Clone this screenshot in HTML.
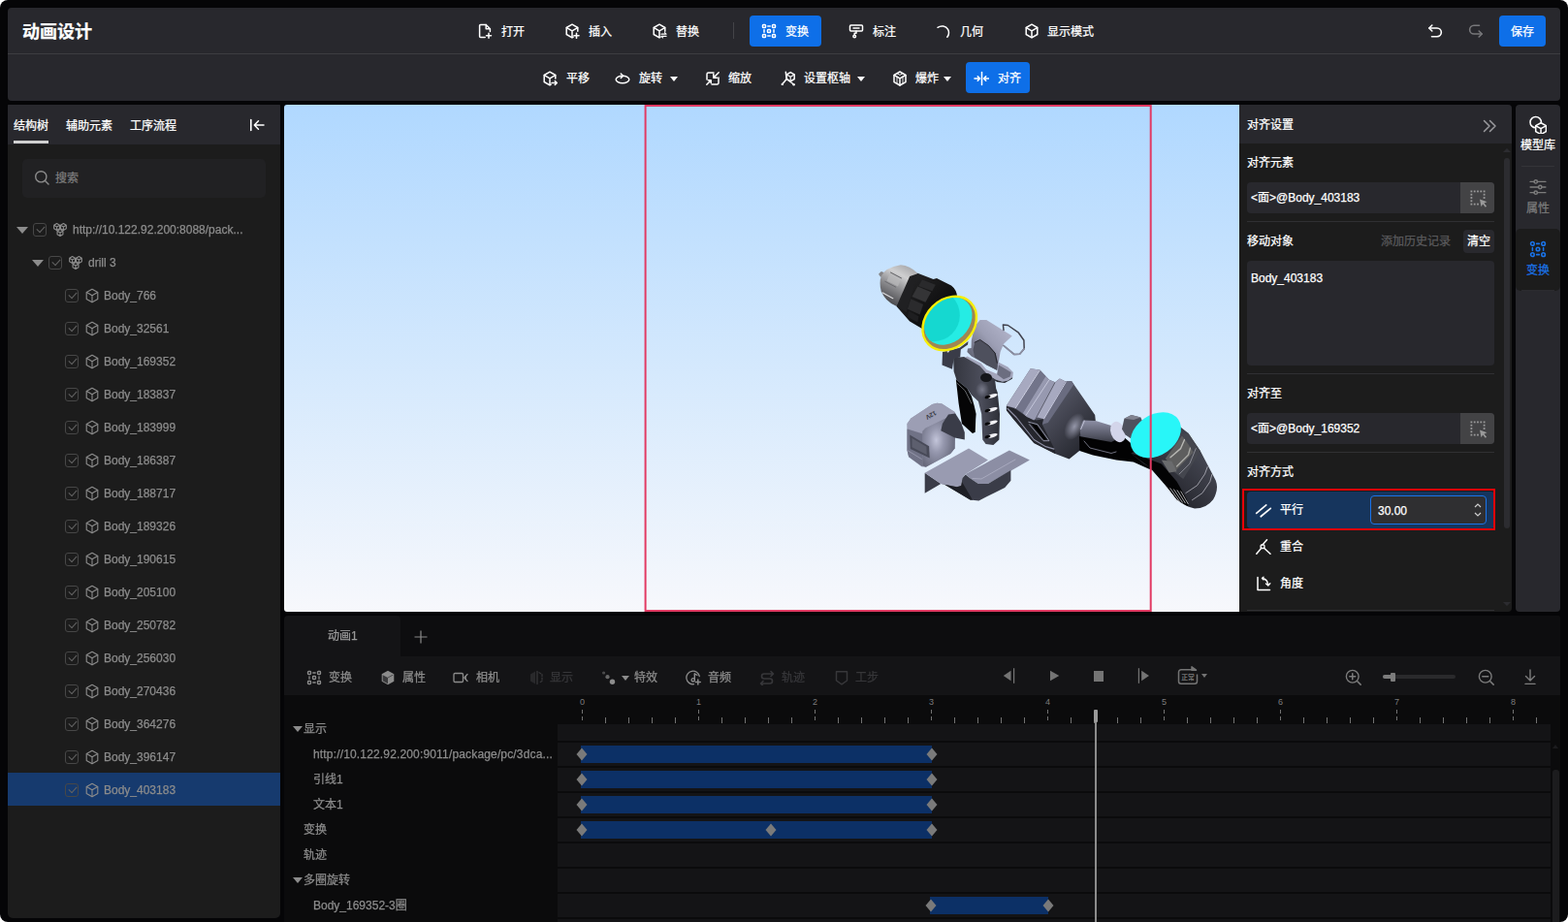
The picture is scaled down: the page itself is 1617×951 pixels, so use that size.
<!DOCTYPE html><html lang="zh-CN"><head><meta charset="utf-8"><title>动画设计</title><style>
html,body{margin:0;padding:0}
html{background:#fff}
body{width:1617px;height:951px;position:relative;overflow:hidden;background:#050507;border-radius:8px;
 font:12px/16px "Liberation Sans","Noto Sans CJK SC",sans-serif;color:#fff;-webkit-text-stroke:.25px currentColor}
*{box-sizing:border-box}
.a{position:absolute}
.ic{display:block;flex:none}
.t{position:absolute;white-space:nowrap;line-height:16px;height:16px}
#top{left:8px;top:8px;width:1601px;height:96px;background:#28282d;border-radius:4px}
#top .hr{left:0;top:47px;width:1601px;height:1px;background:#3d3d41}
.tb{position:absolute;display:flex;align-items:center;height:32px;border-radius:4px;color:#fff}
.tb .ic{margin-right:8px}
.tb.on{background:#0e6fe8}
.caret{width:0;height:0;border-left:4px solid transparent;border-right:4px solid transparent;border-top:5px solid currentColor;margin-left:8px}
#left{left:8px;top:108px;width:281px;height:839px;background:#1c1c1c;border-radius:1px 1px 5px 5px;overflow:hidden}
#left .hd{left:0;top:0;width:281px;height:41px;background:#28282d}
.row{position:absolute;left:0;width:281px;height:34px;color:#8c8c8c}
.row .t{will-change:transform}
.row.sel{background:#163a6e}
.cb{position:absolute;top:10px;width:14px;height:14px;border:1px solid #474747;border-radius:3px}
.cb:after{content:"";position:absolute;left:3px;top:2px;width:7px;height:4px;border-left:1px solid #626262;border-bottom:1px solid #626262;transform:rotate(-47deg)}
.tri{position:absolute;width:0;height:0;border-left:6px solid transparent;border-right:6px solid transparent;border-top:7px solid #8c8c8c}
#view{left:293px;top:108px;width:985px;height:523px;border-radius:3px 0 0 3px;overflow:hidden;
 background:linear-gradient(180deg,#b0d8ff 0%,#d3e8fd 50%,#f7f8fc 100%)}
#right{left:1278px;top:108px;width:281px;height:523px;background:#1c1c1c;border-radius:0 4px 4px 0;overflow:hidden}
#right .hd{left:0;top:0;width:281px;height:40px;background:#28282d}
.inp{position:absolute;left:8px;width:255px;height:32px;background:#28282d;border-radius:4px;overflow:hidden}
.inp .pk{position:absolute;right:0;top:0;width:35px;height:32px;background:#434345;color:#9a9a9a}
.dv{position:absolute;left:8px;width:255px;height:1px;background:#303033}
#side{left:1563px;top:108px;width:46px;height:523px;background:#28282d;border-radius:4px;overflow:hidden}
#tl{left:293px;top:635px;width:1316px;height:316px;background:#0b0b0c;overflow:hidden;border-radius:4px 2px 0 0}
.g{color:#8c8c8c}
#tl .t{will-change:transform}
.d{color:#37373a}
</style></head><body><div id="top" class="a"><div class="t" style="left:15px;top:12px;font-size:18px;font-weight:bold;line-height:26px;height:26px">动画设计</div><div class="a hr"></div><div class="tb" style="left:472px;top:8px;width:74px"><div class="a" style="left:12px;top:8px"><svg class="ic" width="16" height="16" viewBox="0 0 16 16" fill="none" stroke="currentColor" stroke-width="1.5" stroke-linecap="round" stroke-linejoin="round" style=""><path d="M9.2 1.5H3.6a1 1 0 0 0-1 1v11a1 1 0 0 0 1 1h4.6"/><path d="M9.2 1.5l4.2 4.2v2.8"/><path d="M9.2 1.7v4h4"/><path d="M12 10.2v5M9.5 12.7h5"/></svg></div><div class="t" style="left:37px;top:9px">打开</div></div><div class="tb" style="left:562px;top:8px;width:74px"><div class="a" style="left:12px;top:8px"><svg class="ic" width="16" height="16" viewBox="0 0 16 16" fill="none" stroke="currentColor" stroke-width="1.5" stroke-linecap="round" stroke-linejoin="round" style=""><path d="M13.8 8.2V4.5L8 1.2 2.2 4.5v7L8 14.8l1.2-.7"/><path d="M2.4 4.6 8 7.8l5.6-3.2M8 7.8v6.8"/><path d="M12.5 10.3v5M10 12.8h5" stroke-width="1.6"/></svg></div><div class="t" style="left:37px;top:9px">插入</div></div><div class="tb" style="left:652px;top:8px;width:74px"><div class="a" style="left:12px;top:8px"><svg class="ic" width="16" height="16" viewBox="0 0 16 16" fill="none" stroke="currentColor" stroke-width="1.5" stroke-linecap="round" stroke-linejoin="round" style=""><path d="M13.8 8.2V4.5L8 1.2 2.2 4.5v7L8 14.8l1-.6"/><path d="M2.4 4.6 8 7.8l5.6-3.2M8 7.8v6.8"/><path d="M10 11.2h5l-1.5-1.5M15 13.4h-5l1.5 1.5" stroke-width="1.2"/></svg></div><div class="t" style="left:37px;top:9px">替换</div></div><div class="tb on" style="left:765px;top:8px;width:74px"><div class="a" style="left:12px;top:8px"><svg class="ic" width="16" height="16" viewBox="0 0 16 16" fill="none" stroke="currentColor" stroke-width="1.5" stroke-linecap="round" stroke-linejoin="round" style=""><rect x="1.5" y="1.5" width="3" height="3" rx=".8"/><rect x="11.5" y="1.5" width="3" height="3" rx=".8"/><rect x="1.5" y="11.5" width="3" height="3" rx=".8"/><rect x="11.5" y="11.5" width="3" height="3" rx=".8"/><rect x="6.5" y="6.5" width="3" height="3" rx=".8"/><path d="M6.8 3h2.4M6.8 13h2.4M3 6.8v2.4M13 6.8v2.4"/></svg></div><div class="t" style="left:37px;top:9px">变换</div></div><div class="tb" style="left:855px;top:8px;width:74px"><div class="a" style="left:12px;top:8px"><svg class="ic" width="16" height="16" viewBox="0 0 16 16" fill="none" stroke="currentColor" stroke-width="1.5" stroke-linecap="round" stroke-linejoin="round" style=""><rect x="1.5" y="2" width="13" height="6" rx="1"/><path d="M5 5h6"/><path d="M8 8v2.2H6.2v2"/><circle cx="6.2" cy="13.5" r="1.3"/></svg></div><div class="t" style="left:37px;top:9px">标注</div></div><div class="tb" style="left:945px;top:8px;width:74px"><div class="a" style="left:12px;top:8px"><svg class="ic" width="16" height="16" viewBox="0 0 16 16" fill="none" stroke="currentColor" stroke-width="1.5" stroke-linecap="round" stroke-linejoin="round" style=""><path d="M2 4.300c3.500-2.400 8.500-1.600 10.600 2 1.500 2.800 1 5.600-.800 7.900"/></svg></div><div class="t" style="left:37px;top:9px">几何</div></div><div class="tb" style="left:1035px;top:8px;width:98px"><div class="a" style="left:13px;top:8px"><svg class="ic" width="16" height="16" viewBox="0 0 16 16" fill="none" stroke="currentColor" stroke-width="1.5" stroke-linecap="round" stroke-linejoin="round" style=""><path d="M8 1.2 13.8 4.5v7L8 14.8 2.2 11.5v-7z"/><path d="M2.4 4.6 8 7.8l5.6-3.2M8 7.8v6.8"/></svg></div><div class="t" style="left:37px;top:9px">显示模式</div></div><div class="a" style="left:748px;top:15px;width:1px;height:17px;background:#444448"></div><div class="tb" style="left:543px;top:56px;width:66px"><div class="a" style="left:8px;top:9px"><svg class="ic" width="16" height="16" viewBox="0 0 16 16" fill="none" stroke="currentColor" stroke-width="1.5" stroke-linecap="round" stroke-linejoin="round" style=""><path d="M13.8 8V4.500L8 1.200 2.200 4.500v7L8 14.800l1.200-.700"/><path d="M2.400 4.600 8 7.800l5.600-3.200M8 7.800v6.800"/><path d="M10 12.500h5.200M13.300 10.500l2 2-2 2"/></svg></div><div class="t" style="left:33px;top:9px">平移</div></div><div class="tb" style="left:618px;top:56px;width:80px"><div class="a" style="left:8px;top:9px"><svg class="ic" width="16" height="16" viewBox="0 0 16 16" fill="none" stroke="currentColor" stroke-width="1.5" stroke-linecap="round" stroke-linejoin="round" style=""><ellipse cx="8" cy="9" rx="6.800" ry="3.800"/><path d="M6.300 3 8.600 5.200 6.300 7.400" /></svg></div><div class="t" style="left:33px;top:9px">旋转</div><i class="caret a" style="left:65px;top:15px;margin:0"></i></div><div class="tb" style="left:711px;top:56px;width:66px"><div class="a" style="left:8px;top:9px"><svg class="ic" width="16" height="16" viewBox="0 0 16 16" fill="none" stroke="currentColor" stroke-width="1.5" stroke-linecap="round" stroke-linejoin="round" style=""><path d="M9 2H3.500a1.500 1.500 0 0 0-1.500 1.500V9"/><path d="M7 14h5.500a1.500 1.500 0 0 0 1.500-1.500V7"/><path d="M14.200 1.800 8.800 7.200M8.800 3.600v3.600h3.600"/><path d="M1.800 14.200l4.400-4.400M6.200 12.800v-3h-3"/></svg></div><div class="t" style="left:32px;top:9px">缩放</div></div><div class="tb" style="left:789px;top:56px;width:102px"><div class="a" style="left:8px;top:9px"><svg class="ic" width="16" height="16" viewBox="0 0 16 16" fill="none" stroke="currentColor" stroke-width="1.5" stroke-linecap="round" stroke-linejoin="round" style=""><path d="M10.200 1.600 14.200 3.900v4.600l-4 2.300-4-2.300V3.900z"/><path d="M6.400 4 10.200 6.200 14 4M10.200 6.200v4.400" stroke-width="1.100"/><path d="M5.300 1.300 6.200 8.500 1.800 13.800M6.200 8.500l7.300 5.500" stroke-width="1.500"/><circle cx="1.800" cy="13.900" r="1.200" fill="currentColor" stroke="none"/><circle cx="13.600" cy="14.200" r="1.200" fill="currentColor" stroke="none"/></svg></div><div class="t" style="left:32px;top:9px">设置枢轴</div><i class="caret a" style="left:87px;top:15px;margin:0"></i></div><div class="tb" style="left:904px;top:56px;width:76px"><div class="a" style="left:8px;top:9px"><svg class="ic" width="16" height="16" viewBox="0 0 16 16" fill="none" stroke="currentColor" stroke-width="1.5" stroke-linecap="round" stroke-linejoin="round" style=""><path d="M8 1 14 4.400v7.200L8 15 2 11.600V4.400z"/><path d="M2.200 4.500 8 7.800l5.800-3.300M8 7.800V15"/><path d="M5 6.200v7M11 6.200v7M5.200 2.800 8 4.400l2.800-1.600" stroke-width=".9"/></svg></div><div class="t" style="left:32px;top:9px">爆炸</div><i class="caret a" style="left:61px;top:15px;margin:0"></i></div><div class="tb on" style="left:988px;top:56px;width:66px"><div class="a" style="left:8px;top:9px"><svg class="ic" width="16" height="16" viewBox="0 0 16 16" fill="none" stroke="currentColor" stroke-width="1.6" stroke-linecap="round" stroke-linejoin="round" style=""><path d="M8.500 1.500v13" stroke-width="1.500"/><path d="M1 8h5.300M4.300 5.800 6.500 8 4.300 10.200M16 8h-5.300M12.700 5.800 10.500 8l2.200 2.200"/></svg></div><div class="t" style="left:33px;top:9px">对齐</div></div><div class="a" style="left:1464px;top:16px;color:#fff"><svg class="ic" width="16" height="16" viewBox="0 0 16 16" fill="none" stroke="currentColor" stroke-width="1.6" stroke-linecap="round" stroke-linejoin="round" style=""><path d="M4.800 2 1.800 5l3 3"/><path d="M2 5h8a4.300 4.300 0 0 1 0 8.700H4.500"/></svg></div><div class="a" style="left:1506px;top:16px;color:#77777a"><svg class="ic" width="16" height="16" viewBox="0 0 16 16" fill="none" stroke="currentColor" stroke-width="1.6" stroke-linecap="round" stroke-linejoin="round" style=""><g transform="rotate(180 8 8)"><path d="M4.800 2 1.800 5l3 3"/><path d="M2 5h8a4.300 4.300 0 0 1 0 8.700H4.500"/></g></svg></div><div class="tb on" style="left:1538px;top:8px;width:48px"><div class="t" style="left:12px;top:9px">保存</div></div></div><div id="left" class="a"><div class="a hd"></div><div class="t" style="left:6px;top:14px">结构树</div><div class="t" style="left:60px;top:14px">辅助元素</div><div class="t" style="left:126px;top:14px">工序流程</div><div class="a" style="left:6px;top:37px;width:36px;height:3px;background:#d0d0d0"></div><div class="a" style="left:249px;top:13px;color:#fff"><svg class="ic" width="16" height="16" viewBox="0 0 16 16" fill="none" stroke="currentColor" stroke-width="1.3" stroke-linecap="round" stroke-linejoin="round" style=""><path d="M1.800 2.500v11" stroke-width="1.600"/><path d="M15 8H5.500M9.500 3.800 5.300 8l4.200 4.200" stroke-width="1.500"/></svg></div><div class="a" style="left:15px;top:56px;width:251px;height:40px;background:#212123;border-radius:5px"></div><div class="a" style="left:27px;top:67px;color:#8c8c8c"><svg class="ic" width="16" height="16" viewBox="0 0 16 16" fill="none" stroke="currentColor" stroke-width="1.4" stroke-linecap="round" stroke-linejoin="round" style=""><circle cx="7.300" cy="7.300" r="5.600"/><path d="M11.500 11.500l3.500 3.500"/></svg></div><div class="t" style="left:49px;top:68px;color:#7c7c7c">搜索</div><div class="row" style="top:112px"><i class="tri" style="left:9px;top:14px"></i><i class="cb" style="left:26px"></i><div class="a" style="left:46px;top:9px"><svg class="ic" width="16" height="16" viewBox="0 0 16 16" fill="none" stroke="currentColor" stroke-width="1.1" stroke-linecap="round" stroke-linejoin="round" style=""><path d="M4.60 1.60 7.54 3.30 7.54 6.70 4.60 8.40 1.66 6.70 1.66 3.30zM1.66 3.30 L4.60 5.00 L7.54 3.30 M4.60 5.00 V8.40"/><path d="M11.40 1.60 14.34 3.30 14.34 6.70 11.40 8.40 8.46 6.70 8.46 3.30zM8.46 3.30 L11.40 5.00 L14.34 3.30 M11.40 5.00 V8.40"/><path d="M8.00 7.60 10.94 9.30 10.94 12.70 8.00 14.40 5.06 12.70 5.06 9.30zM5.06 9.30 L8.00 11.00 L10.94 9.30 M8.00 11.00 V14.40"/></svg></div><div class="t" style="left:67px;top:9px">http://10.122.92.200:8088/pack...</div></div><div class="row" style="top:146px"><i class="tri" style="left:25px;top:14px"></i><i class="cb" style="left:42px"></i><div class="a" style="left:62px;top:9px"><svg class="ic" width="16" height="16" viewBox="0 0 16 16" fill="none" stroke="currentColor" stroke-width="1.1" stroke-linecap="round" stroke-linejoin="round" style=""><path d="M4.60 1.60 7.54 3.30 7.54 6.70 4.60 8.40 1.66 6.70 1.66 3.30zM1.66 3.30 L4.60 5.00 L7.54 3.30 M4.60 5.00 V8.40"/><path d="M11.40 1.60 14.34 3.30 14.34 6.70 11.40 8.40 8.46 6.70 8.46 3.30zM8.46 3.30 L11.40 5.00 L14.34 3.30 M11.40 5.00 V8.40"/><path d="M8.00 7.60 10.94 9.30 10.94 12.70 8.00 14.40 5.06 12.70 5.06 9.30zM5.06 9.30 L8.00 11.00 L10.94 9.30 M8.00 11.00 V14.40"/></svg></div><div class="t" style="left:83px;top:9px">drill 3</div></div><div class="row" style="top:180px"><i class="cb" style="left:59px"></i><div class="a" style="left:79px;top:9px"><svg class="ic" width="16" height="16" viewBox="0 0 16 16" fill="none" stroke="currentColor" stroke-width="1.1" stroke-linecap="round" stroke-linejoin="round" style=""><path d="M8 1.2 13.8 4.5v7L8 14.8 2.2 11.5v-7z"/><path d="M2.4 4.6 8 7.8l5.6-3.2M8 7.8v6.8"/></svg></div><div class="t" style="left:99px;top:9px">Body_766</div></div><div class="row" style="top:214px"><i class="cb" style="left:59px"></i><div class="a" style="left:79px;top:9px"><svg class="ic" width="16" height="16" viewBox="0 0 16 16" fill="none" stroke="currentColor" stroke-width="1.1" stroke-linecap="round" stroke-linejoin="round" style=""><path d="M8 1.2 13.8 4.5v7L8 14.8 2.2 11.5v-7z"/><path d="M2.4 4.6 8 7.8l5.6-3.2M8 7.8v6.8"/></svg></div><div class="t" style="left:99px;top:9px">Body_32561</div></div><div class="row" style="top:248px"><i class="cb" style="left:59px"></i><div class="a" style="left:79px;top:9px"><svg class="ic" width="16" height="16" viewBox="0 0 16 16" fill="none" stroke="currentColor" stroke-width="1.1" stroke-linecap="round" stroke-linejoin="round" style=""><path d="M8 1.2 13.8 4.5v7L8 14.8 2.2 11.5v-7z"/><path d="M2.4 4.6 8 7.8l5.6-3.2M8 7.8v6.8"/></svg></div><div class="t" style="left:99px;top:9px">Body_169352</div></div><div class="row" style="top:282px"><i class="cb" style="left:59px"></i><div class="a" style="left:79px;top:9px"><svg class="ic" width="16" height="16" viewBox="0 0 16 16" fill="none" stroke="currentColor" stroke-width="1.1" stroke-linecap="round" stroke-linejoin="round" style=""><path d="M8 1.2 13.8 4.5v7L8 14.8 2.2 11.5v-7z"/><path d="M2.4 4.6 8 7.8l5.6-3.2M8 7.8v6.8"/></svg></div><div class="t" style="left:99px;top:9px">Body_183837</div></div><div class="row" style="top:316px"><i class="cb" style="left:59px"></i><div class="a" style="left:79px;top:9px"><svg class="ic" width="16" height="16" viewBox="0 0 16 16" fill="none" stroke="currentColor" stroke-width="1.1" stroke-linecap="round" stroke-linejoin="round" style=""><path d="M8 1.2 13.8 4.5v7L8 14.8 2.2 11.5v-7z"/><path d="M2.4 4.6 8 7.8l5.6-3.2M8 7.8v6.8"/></svg></div><div class="t" style="left:99px;top:9px">Body_183999</div></div><div class="row" style="top:350px"><i class="cb" style="left:59px"></i><div class="a" style="left:79px;top:9px"><svg class="ic" width="16" height="16" viewBox="0 0 16 16" fill="none" stroke="currentColor" stroke-width="1.1" stroke-linecap="round" stroke-linejoin="round" style=""><path d="M8 1.2 13.8 4.5v7L8 14.8 2.2 11.5v-7z"/><path d="M2.4 4.6 8 7.8l5.6-3.2M8 7.8v6.8"/></svg></div><div class="t" style="left:99px;top:9px">Body_186387</div></div><div class="row" style="top:384px"><i class="cb" style="left:59px"></i><div class="a" style="left:79px;top:9px"><svg class="ic" width="16" height="16" viewBox="0 0 16 16" fill="none" stroke="currentColor" stroke-width="1.1" stroke-linecap="round" stroke-linejoin="round" style=""><path d="M8 1.2 13.8 4.5v7L8 14.8 2.2 11.5v-7z"/><path d="M2.4 4.6 8 7.8l5.6-3.2M8 7.8v6.8"/></svg></div><div class="t" style="left:99px;top:9px">Body_188717</div></div><div class="row" style="top:418px"><i class="cb" style="left:59px"></i><div class="a" style="left:79px;top:9px"><svg class="ic" width="16" height="16" viewBox="0 0 16 16" fill="none" stroke="currentColor" stroke-width="1.1" stroke-linecap="round" stroke-linejoin="round" style=""><path d="M8 1.2 13.8 4.5v7L8 14.8 2.2 11.5v-7z"/><path d="M2.4 4.6 8 7.8l5.6-3.2M8 7.8v6.8"/></svg></div><div class="t" style="left:99px;top:9px">Body_189326</div></div><div class="row" style="top:452px"><i class="cb" style="left:59px"></i><div class="a" style="left:79px;top:9px"><svg class="ic" width="16" height="16" viewBox="0 0 16 16" fill="none" stroke="currentColor" stroke-width="1.1" stroke-linecap="round" stroke-linejoin="round" style=""><path d="M8 1.2 13.8 4.5v7L8 14.8 2.2 11.5v-7z"/><path d="M2.4 4.6 8 7.8l5.6-3.2M8 7.8v6.8"/></svg></div><div class="t" style="left:99px;top:9px">Body_190615</div></div><div class="row" style="top:486px"><i class="cb" style="left:59px"></i><div class="a" style="left:79px;top:9px"><svg class="ic" width="16" height="16" viewBox="0 0 16 16" fill="none" stroke="currentColor" stroke-width="1.1" stroke-linecap="round" stroke-linejoin="round" style=""><path d="M8 1.2 13.8 4.5v7L8 14.8 2.2 11.5v-7z"/><path d="M2.4 4.6 8 7.8l5.6-3.2M8 7.8v6.8"/></svg></div><div class="t" style="left:99px;top:9px">Body_205100</div></div><div class="row" style="top:520px"><i class="cb" style="left:59px"></i><div class="a" style="left:79px;top:9px"><svg class="ic" width="16" height="16" viewBox="0 0 16 16" fill="none" stroke="currentColor" stroke-width="1.1" stroke-linecap="round" stroke-linejoin="round" style=""><path d="M8 1.2 13.8 4.5v7L8 14.8 2.2 11.5v-7z"/><path d="M2.4 4.6 8 7.8l5.6-3.2M8 7.8v6.8"/></svg></div><div class="t" style="left:99px;top:9px">Body_250782</div></div><div class="row" style="top:554px"><i class="cb" style="left:59px"></i><div class="a" style="left:79px;top:9px"><svg class="ic" width="16" height="16" viewBox="0 0 16 16" fill="none" stroke="currentColor" stroke-width="1.1" stroke-linecap="round" stroke-linejoin="round" style=""><path d="M8 1.2 13.8 4.5v7L8 14.8 2.2 11.5v-7z"/><path d="M2.4 4.6 8 7.8l5.6-3.2M8 7.8v6.8"/></svg></div><div class="t" style="left:99px;top:9px">Body_256030</div></div><div class="row" style="top:588px"><i class="cb" style="left:59px"></i><div class="a" style="left:79px;top:9px"><svg class="ic" width="16" height="16" viewBox="0 0 16 16" fill="none" stroke="currentColor" stroke-width="1.1" stroke-linecap="round" stroke-linejoin="round" style=""><path d="M8 1.2 13.8 4.5v7L8 14.8 2.2 11.5v-7z"/><path d="M2.4 4.6 8 7.8l5.6-3.2M8 7.8v6.8"/></svg></div><div class="t" style="left:99px;top:9px">Body_270436</div></div><div class="row" style="top:622px"><i class="cb" style="left:59px"></i><div class="a" style="left:79px;top:9px"><svg class="ic" width="16" height="16" viewBox="0 0 16 16" fill="none" stroke="currentColor" stroke-width="1.1" stroke-linecap="round" stroke-linejoin="round" style=""><path d="M8 1.2 13.8 4.5v7L8 14.8 2.2 11.5v-7z"/><path d="M2.4 4.6 8 7.8l5.6-3.2M8 7.8v6.8"/></svg></div><div class="t" style="left:99px;top:9px">Body_364276</div></div><div class="row" style="top:656px"><i class="cb" style="left:59px"></i><div class="a" style="left:79px;top:9px"><svg class="ic" width="16" height="16" viewBox="0 0 16 16" fill="none" stroke="currentColor" stroke-width="1.1" stroke-linecap="round" stroke-linejoin="round" style=""><path d="M8 1.2 13.8 4.5v7L8 14.8 2.2 11.5v-7z"/><path d="M2.4 4.6 8 7.8l5.6-3.2M8 7.8v6.8"/></svg></div><div class="t" style="left:99px;top:9px">Body_396147</div></div><div class="row" style="top:690px"><div class="a" style="left:0;top:-1px;width:281px;height:34px;background:#163a6e"></div><i class="cb" style="left:59px"></i><div class="a" style="left:79px;top:9px"><svg class="ic" width="16" height="16" viewBox="0 0 16 16" fill="none" stroke="currentColor" stroke-width="1.1" stroke-linecap="round" stroke-linejoin="round" style=""><path d="M8 1.2 13.8 4.5v7L8 14.8 2.2 11.5v-7z"/><path d="M2.4 4.6 8 7.8l5.6-3.2M8 7.8v6.8"/></svg></div><div class="t" style="left:99px;top:9px">Body_403183</div></div></div><div id="view" class="a"><svg class="a" style="left:0;top:0" width="985" height="523" viewBox="293 108 985 523"><defs>
<linearGradient id="gMetal" x1=".7" y1="0" x2=".2" y2="1"><stop offset="0" stop-color="#a9a9ab"/><stop offset=".25" stop-color="#cfcfd0"/><stop offset=".55" stop-color="#8d8d90"/><stop offset=".8" stop-color="#5e5e62"/><stop offset="1" stop-color="#3c3c40"/></linearGradient>
<linearGradient id="gBlk" x1="0" y1="0" x2="1" y2="1"><stop offset="0" stop-color="#2a2a2c"/><stop offset=".5" stop-color="#151516"/><stop offset="1" stop-color="#020202"/></linearGradient>
<linearGradient id="gClip" x1="1" y1="0" x2="0" y2="1"><stop offset="0" stop-color="#b9bbd1"/><stop offset=".45" stop-color="#9c9eb4"/><stop offset="1" stop-color="#4a4c59"/></linearGradient>
<linearGradient id="gBody" x1="0" y1="0" x2="1" y2="0"><stop offset="0" stop-color="#34363f"/><stop offset=".6" stop-color="#4b4d5a"/><stop offset="1" stop-color="#2e3038"/></linearGradient>
<linearGradient id="gPackR" x1="0" y1="0" x2="1" y2="1"><stop offset="0" stop-color="#5f6175"/><stop offset=".45" stop-color="#505260"/><stop offset="1" stop-color="#1c1d23"/></linearGradient>
<linearGradient id="gNeck" x1="0" y1="0" x2="0" y2="1"><stop offset="0" stop-color="#8e90a6"/><stop offset=".4" stop-color="#4a4c59"/><stop offset=".7" stop-color="#0a0a0c"/><stop offset="1" stop-color="#000"/></linearGradient>
<linearGradient id="gMotor" x1="0" y1="1" x2="1" y2="0"><stop offset="0" stop-color="#050506"/><stop offset=".4" stop-color="#2c2d35"/><stop offset=".7" stop-color="#42444f"/><stop offset="1" stop-color="#33353e"/></linearGradient>
<radialGradient id="gBox" cx=".42" cy=".5" r=".65"><stop offset="0" stop-color="#c3c5da"/><stop offset=".35" stop-color="#9698ae"/><stop offset="1" stop-color="#5e6072"/></radialGradient>
<radialGradient id="gHi" cx=".5" cy=".5" r=".5"><stop offset="0" stop-color="#b9bbd0" stop-opacity=".9"/><stop offset="1" stop-color="#b9bbd0" stop-opacity="0"/></radialGradient>
</defs><polygon points="906.0,282.8 908.7,279.9 911.6,281.1 912.1,285.1 908.1,285.7" fill="#858588" /><path d="M908.7 285.1Q912.7 275.9 928.9 273.3Q938.2 274.1 946.3 281.7L924.3 315.8Q912.7 310.6 908.7 300.2Q906.4 292.1 908.7 285.1Z" fill="url(#gMetal)"/><polyline points="918.5,281.1 929.5,286.9" fill="none" stroke="#5d5d61" stroke-width="1" stroke-linejoin="round" stroke-linecap="round" /><polyline points="912.7,290.3 923.7,296.1" fill="none" stroke="#6a6a6e" stroke-width="1" stroke-linejoin="round" stroke-linecap="round" /><polyline points="910.4,301.9 920.8,307.7" fill="none" stroke="#dcdcde" stroke-width="1.2" stroke-linejoin="round" stroke-linecap="round" /><polygon points="917.4,282.8 928.9,288.0 926.0,295.6 914.5,289.8" fill="#b9b9bb" opacity=".7"/><path d="M946.3 281.7L962.5 288.0L966.0 286.9L981.0 294.4Q986.8 299.0 987.0 306.0L950.9 338.9L938.2 331.4L924.3 315.8Z" fill="url(#gBlk)"/><polygon points="938.2,285.1 946.3,282.2 934.7,322.2 924.9,315.2" fill="#202022" /><polygon points="946.3,295.6 960.2,301.3 954.4,311.8 940.5,306.0" fill="#343436" /><polygon points="950.9,288.6 964.8,293.8 961.3,300.2 947.4,295.0" fill="#2a2a2c" /><polygon points="939.3,308.3 952.1,314.1 948.6,324.5 935.9,318.7" fill="#2b2b2d" /><polygon points="937.0,320.4 947.4,326.2 946.3,332.6 935.9,326.8" fill="#1e1e20" /><polygon points="972.0,363.1 989.7,358.7 998.5,352.1 998.0,355.6 990.8,360.4 990.2,368.6 983.6,369.7 982.0,380.8 971.5,376.4" fill="#3a3c48" /><polygon points="976.4,361.5 978.6,360.9 978.9,363.1 977.0,363.7" fill="#d8d8dc" /><polygon points="1001.8,351.0 1005.1,336.6 1010.7,330.0 1017.3,330.0 1043.8,346.6 1035.0,354.8 1031.6,363.1 1029.7,374.2 1028.3,381.9 1001.8,367.5 997.4,363.1 998.0,359.6 1001.6,358.9" fill="url(#gClip)" /><polygon points="1005.1,353.2 1010.7,350.4 1019.5,356.5 1026.7,364.2 1028.9,374.2 1028.3,381.9 1017.3,376.4 1005.1,368.6 1003.5,360.9" fill="#4e505d" /><polyline points="1005.1,353.2 1010.7,350.4 1019.5,356.5 1026.1,364.2 1028.3,374.2" fill="none" stroke="#16171b" stroke-width="0.8" stroke-linejoin="round" stroke-linecap="round" /><polyline points="1035.0,340.5 1034.4,335.0 1039.4,335.5 1050.4,343.2 1055.9,351.0 1056.2,359.8 1051.5,365.3 1046.0,365.6 1035.0,356.5" fill="none" stroke="#41424d" stroke-width="1.5" stroke-linejoin="round" stroke-linecap="round" /><polyline points="1056.2,359.8 1051.5,365.3 1046.0,365.6 1035.0,356.5" fill="none" stroke="#9092a6" stroke-width="1.4" stroke-linejoin="round" stroke-linecap="round" /><polygon points="1029.4,373.6 1039.4,378.6 1044.9,384.1 1044.3,389.1 1039.4,392.4 1033.9,393.8 1027.2,391.8 1016.2,385.2 1010.7,377.5 994.7,368.9 997.4,367.5 1011.8,374.7 1017.3,381.3 1028.3,385.8" fill="#a3a5bb" /><polygon points="1030.0,376.4 1042.7,384.1 1041.6,388.5 1035.0,391.3 1028.3,386.3" fill="#6c6e80" /><polygon points="1016.2,385.2 1027.2,391.8 1033.9,393.8 1039.4,392.4 1044.3,389.1 1043.8,390.7 1036.1,395.1 1028.3,394.0 1017.3,387.4" fill="#2c2d35" /><polygon points="983.1,369.2 994.1,368.1 1010.7,377.5 1017.3,385.2 1026.1,391.8 1027.2,400.7 1028.8,405.0 1031.0,427.1 1030.4,453.6 1024.4,459.1 1016.6,458.0 1013.3,453.6 1012.2,427.1 1008.9,413.9 1001.8,407.3 997.4,400.7 986.4,391.8 983.6,383.0" fill="url(#gBody)" /><ellipse cx="1017" cy="389.500" rx="6" ry="4.500" fill="#15161a"/><ellipse cx="1013" cy="402" rx="7" ry="8" fill="url(#gHi)" opacity=".45"/><polygon points="985.8,391.3 997.4,400.7 1001.8,408.4 1004.6,418.3 1006.6,427.1 1006.2,432.6 1005.7,445.8 1002.9,446.9 991.9,437.0 988.6,416.0 986.9,400.7" fill="#050506" /><polyline points="986.9,395.1 995.2,402.9 1001.8,416.1" fill="none" stroke="#8a8c90" stroke-width="0.7" stroke-linejoin="round" stroke-linecap="round" /><ellipse cx="1023" cy="408.5" rx="6" ry="1.9" fill="#f2f2f6" transform="rotate(-17 1023 408.5)"/><ellipse cx="1018.500" cy="409.5" rx="3" ry="1.6" fill="#08080a" transform="rotate(-17 1018.500 409.5)"/><ellipse cx="1023" cy="422.5" rx="6" ry="1.9" fill="#f2f2f6" transform="rotate(-17 1023 422.5)"/><ellipse cx="1018.500" cy="423.5" rx="3" ry="1.6" fill="#08080a" transform="rotate(-17 1018.500 423.5)"/><ellipse cx="1023" cy="436.0" rx="6" ry="1.9" fill="#f2f2f6" transform="rotate(-17 1023 436.0)"/><ellipse cx="1018.500" cy="437.0" rx="3" ry="1.6" fill="#08080a" transform="rotate(-17 1018.500 437.0)"/><ellipse cx="1023" cy="449.5" rx="6" ry="1.9" fill="#f2f2f6" transform="rotate(-17 1023 449.5)"/><ellipse cx="1018.500" cy="450.5" rx="3" ry="1.6" fill="#08080a" transform="rotate(-17 1018.500 450.5)"/><polygon points="935.5,437.0 939.4,431.5 961.4,417.1 966.4,415.8 971.4,416.4 984.6,424.9 985.7,429.3 984.6,462.4 980.2,467.9 954.8,481.7 950.4,481.2 937.1,471.2 935.5,464.6" fill="#8e90a6" /><polygon points="935.5,437.0 939.4,431.5 961.4,417.1 966.4,415.8 971.4,416.4 984.6,424.9 985.2,427.1 953.7,442.0 950.9,447.0 936.0,442.5" fill="#9c9eb4" /><polygon points="951.3,444.7 954.3,441.7 985.2,426.5 984.6,462.4 980.2,467.9 954.8,481.7 951.3,480.3" fill="url(#gBox)" /><polygon points="935.5,442.5 951.3,447.5 951.3,481.2 937.1,471.2 935.5,464.6" fill="#707286" /><polygon points="938.2,448.6 958.1,460.2 958.7,472.6 938.8,463.0" fill="#484a58" /><polygon points="940.5,451.9 955.4,460.8 955.7,469.0 940.5,461.3" fill="#5d5f6e" /><polyline points="936.0,464.6 950.4,473.5" fill="none" stroke="#9a9cb0" stroke-width="0.8" stroke-linejoin="round" stroke-linecap="round" /><polygon points="978.0,427.6 985.2,426.5 991.2,435.9 994.8,445.9 994.8,453.6 984.6,451.4 970.3,444.2 971.9,437.0" fill="#3a3c48" /><text x="0" y="0" font-size="6.500" font-weight="bold" fill="#34363f" font-family="Liberation Sans,sans-serif" transform="translate(964 423.500) rotate(150)">12V</text><polygon points="953.7,487.8 970.3,498.9 953.7,508.8" fill="#3a3c48" /><polygon points="953.7,487.8 999.0,462.4 1018.9,474.6 995.7,488.9 992.4,493.3 991.2,501.1 986.8,502.2 970.3,498.9" fill="#999bb1" /><polygon points="995.7,488.9 1040.9,464.6 1061.9,474.6 1018.9,498.9 1008.9,498.9 1000.0,493.0" fill="#8c8ea4" /><polyline points="1003.0,493.5 1012.0,494.0 1047.0,474.0" fill="none" stroke="#aeb0c4" stroke-width="0.8" stroke-linejoin="round" stroke-linecap="round" /><polygon points="970.3,498.9 986.8,502.2 991.2,501.1 992.4,493.3 995.7,489.5 1000.0,493.0 1008.9,498.9 1018.9,498.9 1042.4,485.1 1042.4,495.8 1036.2,503.0 1009.4,516.4 1000.4,515.5 973.6,499.4" fill="#3a3c48" /><polygon points="970.3,498.9 986.8,502.2 991.2,501.1 992.0,497.0 1003.0,515.7 1000.4,515.5 973.6,499.4" fill="#1e1f25" /><polygon points="1037.9,418.4 1062.7,380.3 1072.3,381.5 1082.0,391.8 1088.1,394.2 1092.9,390.6 1098.9,393.6 1105.0,393.0 1129.2,428.1 1129.8,434.1 1117.1,437.7 1114.7,463.7 1102.6,473.4 1088.1,468.0 1066.3,457.1 1045.7,432.9 1037.9,423.2" fill="url(#gPackR)" /><ellipse cx="1108" cy="440" rx="9" ry="15" fill="url(#gHi)" opacity=".8" transform="rotate(28 1108 440)"/><polygon points="1037.9,419.0 1046.9,421.4 1059.0,429.9 1068.7,433.5 1076.0,432.3 1074.8,437.7 1088.1,464.4 1088.1,468.0 1066.3,457.1 1045.7,432.9 1037.9,423.2" fill="#25262d" /><polyline points="1039.1,421.4 1048.1,430.5 1066.3,453.5 1078.4,460.7 1086.9,463.1" fill="none" stroke="#8d8fa4" stroke-width="1.2" stroke-linejoin="round" stroke-linecap="round" /><polyline points="1060.8,435.3 1069.9,437.7 1082.0,454.7 1076.0,454.7 1061.5,437.7" fill="none" stroke="#9a9cb0" stroke-width="0.9" stroke-linejoin="round" stroke-linecap="round" /><polygon points="1062.7,436.5 1069.3,438.9 1079.6,453.5 1076.6,453.5" fill="#000" /><polygon points="1037.9,418.4 1062.7,380.3 1072.3,381.5 1047.2,421.0" fill="#a7a9c0" /><polygon points="1047.2,421.0 1072.3,381.5 1078.4,388.1 1054.8,426.2" fill="#72748a" /><polygon points="1054.8,426.2 1078.4,388.1 1082.0,391.8 1088.1,394.2 1068.5,431.1 1066.3,433.5 1059.0,429.9" fill="#9799b0" /><polygon points="1068.5,431.1 1088.1,394.2 1092.9,390.6 1098.9,393.6 1076.6,432.3 1069.9,430.5" fill="#a7a9c0" /><polygon points="1076.6,432.3 1098.9,393.6 1105.0,393.0 1107.4,396.6 1080.8,435.9 1074.8,437.7" fill="#6a6c80" /><polyline points="1047.2,421.0 1072.3,381.9" fill="none" stroke="#d0d2e4" stroke-width="1" stroke-linejoin="round" stroke-linecap="round" /><polyline points="1058.1,428.3 1081.8,392.0" fill="none" stroke="#c4c6da" stroke-width="1" stroke-linejoin="round" stroke-linecap="round" /><polyline points="1076.6,431.9 1099.2,394.0" fill="none" stroke="#c9cbe0" stroke-width="1" stroke-linejoin="round" stroke-linecap="round" /><polyline points="1068.5,431.1 1087.8,394.8" fill="none" stroke="#50525f" stroke-width="0.8" stroke-linejoin="round" stroke-linecap="round" /><polygon points="1113.5,441.4 1117.1,433.5 1129.8,434.1 1146.1,438.9 1149.1,443.8 1152.2,458.3 1163.1,469.2 1180.0,475.2 1180.0,480.1 1151.0,467.4 1146.1,468.0 1124.4,461.9 1114.7,463.7 1114.7,453.5" fill="url(#gNeck)" /><polyline points="1114.7,442.6 1118.3,434.1" fill="none" stroke="#c0c2d6" stroke-width="1" stroke-linejoin="round" stroke-linecap="round" /><polygon points="1113.0,450.0 1146.0,456.0 1158.0,450.0 1172.0,462.0 1180.0,474.0 1192.0,486.0 1184.4,483.5 1168.8,476.5 1151.4,474.6 1127.2,469.4 1113.3,465.0" fill="#020203" /><polyline points="1118.0,455.0 1124.0,462.0 1146.0,467.5 1151.0,466.0" fill="none" stroke="#8a8c9e" stroke-width="0.8" stroke-linejoin="round" stroke-linecap="round" /><ellipse cx="1153" cy="445.500" rx="7.500" ry="11" fill="#d3d5ea" transform="rotate(-20 1153 445.500)"/><polygon points="1157.0,442.6 1159.4,431.7 1166.7,428.1 1176.4,430.5 1177.6,433.5 1167.9,453.5 1160.6,448.6" fill="#4e505c" /><polygon points="1159.4,431.7 1166.7,428.1 1176.4,430.5 1169.1,432.9" fill="#80828f" /><path d="M1213.6 437.6L1225.4 446.8L1237.9 465.2L1253.7 495.4Q1257.3 504.6 1251.1 515.2Q1243.9 524.6 1232.0 524.6Q1221.5 522.0 1213.6 515.2L1203.1 502.0L1190.0 483.6L1179.4 478.4L1166.3 467.8Z" fill="url(#gMotor)"/><polygon points="1166.3,467.8 1184.7,481.0 1203.1,502.0 1213.6,515.2 1225.4,522.4 1224.1,515.2 1213.6,496.8 1197.8,478.4 1179.4,471.8" fill="#030304" /><polygon points="1201.8,473.1 1218.9,449.4 1232.0,465.2 1216.2,488.9" fill="#5e5e5e" /><polyline points="1207.0,471.8 1217.6,462.6 1221.5,453.4" fill="none" stroke="#b8b8b4" stroke-width="1.4" stroke-linejoin="round" stroke-linecap="round" /><polyline points="1213.6,481.0 1225.4,469.2 1228.1,460.0" fill="none" stroke="#a9a9a5" stroke-width="1.4" stroke-linejoin="round" stroke-linecap="round" /><polygon points="1218.9,448.1 1225.4,446.8 1237.9,465.2 1234.6,471.1 1220.2,494.1 1211.0,486.9 1230.7,466.5" fill="#44464e" /><polygon points="1197.8,474.4 1208.4,475.7 1213.6,486.2 1205.7,487.6" fill="#6a6b6d" /><polyline points="1222.8,508.6 1234.6,500.7 1242.5,488.9 1245.2,481.6" fill="none" stroke="#c5c5d0" stroke-width="0.7" stroke-linejoin="round" stroke-linecap="round" /><polyline points="1229.4,515.8 1239.9,508.6 1247.8,496.8 1249.8,489.5" fill="none" stroke="#c5c5d0" stroke-width="0.7" stroke-linejoin="round" stroke-linecap="round" /><polyline points="1216.2,488.9 1226.8,478.4 1233.3,462.6" fill="none" stroke="#b5b5c0" stroke-width="0.6" stroke-linejoin="round" stroke-linecap="round" /><polyline points="1203.1,502.7 1213.6,516.5" fill="none" stroke="#d0d0d4" stroke-width="0.8" stroke-linejoin="round" stroke-linecap="round" /><polyline points="1206.8,503.7 1216.5,517.3" fill="none" stroke="#d0d0d4" stroke-width="0.8" stroke-linejoin="round" stroke-linecap="round" /><polyline points="1210.5,504.8 1219.4,518.1" fill="none" stroke="#d0d0d4" stroke-width="0.8" stroke-linejoin="round" stroke-linecap="round" /><polyline points="1214.1,505.8 1222.3,518.8" fill="none" stroke="#d0d0d4" stroke-width="0.8" stroke-linejoin="round" stroke-linecap="round" /><polyline points="1217.8,506.9 1225.2,519.6" fill="none" stroke="#d0d0d4" stroke-width="0.8" stroke-linejoin="round" stroke-linecap="round" /><g transform="rotate(-45 979.2 333.5)"><ellipse cx="979.2" cy="333.5" rx="30.500" ry="24.500" fill="#9f8654"/><ellipse cx="980" cy="330.900" rx="27.500" ry="21.400" fill="#25ece4"/><clipPath id="cD"><ellipse cx="980" cy="330.900" rx="27.500" ry="21.400"/></clipPath><circle cx="973.500" cy="316" r="27" fill="#12d3cb" opacity=".8" clip-path="url(#cD)"/><ellipse cx="979.2" cy="333.5" rx="30.600" ry="24.600" fill="none" stroke="#f6ee05" stroke-width="2.400"/></g><ellipse cx="1191.800" cy="448.700" rx="28.400" ry="20.800" fill="#28f6f8" transform="rotate(-35 1191.800 448.700)"/></svg><svg class="a" style="left:0;top:0" width="985" height="523" viewBox="293 108 985 523"><rect x="665.6" y="109" width="521.1" height="521" fill="none" stroke="#e23a63" stroke-width="2"/></svg></div><div id="right" class="a"><div class="a hd"></div><div class="t" style="left:8px;top:13px">对齐设置</div><div class="a" style="left:250px;top:14px;color:#9a9a9e"><svg class="ic" width="16" height="16" viewBox="0 0 16 16" fill="none" stroke="currentColor" stroke-width="1.5" stroke-linecap="round" stroke-linejoin="round" style=""><path d="M2.500 2.500 8 8l-5.500 5.500M8.500 2.500 14 8l-5.500 5.500"/></svg></div><div class="a" style="left:273px;top:55px;width:6px;height:382px;background:#2c2c30;border-radius:3px"></div><div class="a" style="left:272px;top:45px;width:0;height:0;border-left:4px solid transparent;border-right:4px solid transparent;border-bottom:4px solid #2c2c30"></div><div class="a" style="left:272px;top:513px;width:0;height:0;border-left:4px solid transparent;border-right:4px solid transparent;border-top:4px solid #2c2c30"></div><div class="t" style="left:8px;top:52px">对齐元素</div><div class="inp" style="top:80px"><div class="t" style="left:4px;top:8px">&lt;面&gt;@Body_403183</div><div class="pk"><div class="a" style="left:10px;top:8px"><svg class="ic" width="18" height="18" viewBox="0 0 18 18" style="color:#9a9a9a"><g fill="currentColor" stroke="none"><rect x="0.5" y=".500" width="1.800" height="1.800"/><rect x="3.8" y=".500" width="1.800" height="1.800"/><rect x=".500" y="3.8" width="1.800" height="1.800"/><rect x="13.700" y="3.8" width="1.800" height="1.800"/><rect x="3.8" y="13.700" width="1.800" height="1.800"/><rect x="7.1" y=".500" width="1.800" height="1.800"/><rect x=".500" y="7.1" width="1.800" height="1.800"/><rect x="13.700" y="7.1" width="1.800" height="1.800"/><rect x="7.1" y="13.700" width="1.800" height="1.800"/><rect x="10.4" y=".500" width="1.800" height="1.800"/><rect x=".500" y="10.4" width="1.800" height="1.800"/><rect x="13.7" y=".500" width="1.800" height="1.800"/><rect x=".500" y="13.7" width="1.800" height="1.800"/><path d="M10 9.500l7.500 2.800-3 1.300 2.600 3.200-1.300 1-2.600-3.200-1.700 2.600z"/></g></svg></div></div></div><div class="dv" style="top:120px"></div><div class="t" style="left:8px;top:133px">移动对象</div><div class="t" style="left:146px;top:133px;color:#5a5a5c">添加历史记录</div><div class="a" style="left:231px;top:129px;width:32px;height:24px;background:#29292e;border-radius:4px"></div><div class="t" style="left:235px;top:133px">清空</div><div class="a" style="left:8px;top:161px;width:255px;height:108px;background:#28282d;border-radius:4px"></div><div class="t" style="left:12px;top:171px">Body_403183</div><div class="dv" style="top:277px"></div><div class="t" style="left:8px;top:290px">对齐至</div><div class="inp" style="top:318px"><div class="t" style="left:4px;top:8px">&lt;面&gt;@Body_169352</div><div class="pk"><div class="a" style="left:10px;top:8px"><svg class="ic" width="18" height="18" viewBox="0 0 18 18" style="color:#9a9a9a"><g fill="currentColor" stroke="none"><rect x="0.5" y=".500" width="1.800" height="1.800"/><rect x="3.8" y=".500" width="1.800" height="1.800"/><rect x=".500" y="3.8" width="1.800" height="1.800"/><rect x="13.700" y="3.8" width="1.800" height="1.800"/><rect x="3.8" y="13.700" width="1.800" height="1.800"/><rect x="7.1" y=".500" width="1.800" height="1.800"/><rect x=".500" y="7.1" width="1.800" height="1.800"/><rect x="13.700" y="7.1" width="1.800" height="1.800"/><rect x="7.1" y="13.700" width="1.800" height="1.800"/><rect x="10.4" y=".500" width="1.800" height="1.800"/><rect x=".500" y="10.4" width="1.800" height="1.800"/><rect x="13.7" y=".500" width="1.800" height="1.800"/><rect x=".500" y="13.7" width="1.800" height="1.800"/><path d="M10 9.500l7.500 2.800-3 1.300 2.600 3.200-1.300 1-2.600-3.200-1.700 2.600z"/></g></svg></div></div></div><div class="dv" style="top:358px"></div><div class="t" style="left:8px;top:371px">对齐方式</div><div class="a" style="left:8px;top:399px;width:255px;height:38px;background:#16355d;border-radius:4px"></div><div class="a" style="left:3px;top:396px;width:261px;height:43px;border:2px solid #e80008"></div><div class="a" style="left:16px;top:409px"><svg class="ic" width="18" height="18" viewBox="0 0 16 16" fill="none" stroke="currentColor" stroke-width="1.3" stroke-linecap="round" stroke-linejoin="round" style=""><path d="M1.500 11 10.500 3.500M5.500 14 14.500 6.500" stroke-width="1.500"/></svg></div><div class="t" style="left:42px;top:410px">平行</div><div class="a" style="left:135px;top:403px;width:120px;height:30px;background:#2f2f31;border:1px solid #1a73e8;border-radius:4px"></div><div class="t" style="left:143px;top:411px">30.00</div><svg class="a" style="left:241px;top:409px" width="10" height="18" viewBox="0 0 10 18" fill="none" stroke="#cfcfcf" stroke-width="1.2"><path d="M2 6 5 3l3 3M2 12l3 3 3-3"/></svg><div class="a" style="left:17px;top:448px"><svg class="ic" width="16" height="16" viewBox="0 0 16 16" fill="none" stroke="currentColor" stroke-width="1.3" stroke-linecap="round" stroke-linejoin="round" style=""><path d="M11.500 .800 6.500 6.500M6 9 .800 15.200M8.500 9.200l6.500 6" stroke-width="1.500"/><circle cx="7" cy="7.700" r="2"/></svg></div><div class="t" style="left:42px;top:448px">重合</div><div class="a" style="left:17px;top:486px"><svg class="ic" width="16" height="16" viewBox="0 0 16 16" fill="none" stroke="currentColor" stroke-width="1.3" stroke-linecap="round" stroke-linejoin="round" style=""><path d="M2 1.500v13h12.500" stroke-width="1.500"/><path d="M6.500 2.500c3.500.500 6 3.200 6.300 7M10.500 8l2.300 2 2-2.300"/><path d="M6.500 2.500 8.200 1M6.500 2.500 8 4.200" stroke-width="1.100"/></svg></div><div class="t" style="left:42px;top:486px">角度</div><div class="dv" style="top:521px"></div></div><div id="side" class="a"><div class="a" style="left:13px;top:11px;color:#fff"><svg class="ic" width="19" height="19" viewBox="0 0 16 16" fill="none" stroke="currentColor" stroke-width="1.3" stroke-linecap="round" stroke-linejoin="round" style=""><circle cx="6.500" cy="6" r="4.800"/><path d="M11 6.500 15.500 9v5L11 16.500 6.500 14V9z" fill="#28282d"/><path d="M6.700 9.100 11 11.500l4.300-2.400M11 11.500v4.800"/></svg></div><div class="t" style="left:5px;top:34px">模型库</div><div class="a" style="left:6px;top:63px;width:34px;height:1px;background:#343438"></div><div class="a" style="left:14px;top:76px;color:#7c7c7c"><svg class="ic" width="18" height="18" viewBox="0 0 16 16" fill="none" stroke="currentColor" stroke-width="1.3" stroke-linecap="round" stroke-linejoin="round" style=""><path d="M1 3h3.500M7.500 3H15M1 8h7.500M11.500 8H15M1 13h3.500M7.500 13H15"/><circle cx="6" cy="3" r="1.500"/><circle cx="10" cy="8" r="1.500"/><circle cx="6" cy="13" r="1.500"/></svg></div><div class="t" style="left:11px;top:99px;color:#7c7c7c">属性</div><div class="a" style="left:0;top:128px;width:46px;height:64px;background:#1c1c1c;border-radius:5px"></div><div class="a" style="left:6px;top:191px;width:34px;height:1px;background:#2b2b2f"></div><div class="a" style="left:14px;top:140px;color:#1a73e8"><svg class="ic" width="18" height="18" viewBox="0 0 16 16" fill="none" stroke="currentColor" stroke-width="1.4" stroke-linecap="round" stroke-linejoin="round" style=""><circle cx="3" cy="3" r="1.6"/><circle cx="13" cy="3" r="1.6"/><circle cx="3" cy="13" r="1.6"/><circle cx="13" cy="13" r="1.6"/><circle cx="8" cy="8" r="1.6"/><path d="M6.8 3h2.4M6.8 13h2.4M3 6.8v2.4M13 6.8v2.4"/></svg></div><div class="t" style="left:11px;top:163px;color:#1a73e8">变换</div></div><div id="tl" class="a"><div class="a" style="left:0;top:0;width:1316px;height:42px;background:#0d0d0f"></div><div class="a" style="left:0;top:0;width:120px;height:42px;background:#141416;border-radius:4px 4px 0 0"></div><div class="t" style="left:45px;top:13px;color:#9a9a9a">动画1</div><svg class="a" style="left:134px;top:15px" width="14" height="14" viewBox="0 0 14 14" stroke="#8a8a8a" stroke-width="1.2"><path d="M7 .5v13M.5 7h13"/></svg><div class="a" style="left:0;top:42px;width:1316px;height:40px;background:#141416"></div><div class="a g" style="left:23px;top:56px"><svg class="ic" width="16" height="16" viewBox="0 0 16 16" fill="none" stroke="currentColor" stroke-width="1.3" stroke-linecap="round" stroke-linejoin="round" style=""><rect x="1.5" y="1.5" width="3" height="3" rx=".8"/><rect x="11.5" y="1.5" width="3" height="3" rx=".8"/><rect x="1.5" y="11.5" width="3" height="3" rx=".8"/><rect x="11.5" y="11.5" width="3" height="3" rx=".8"/><rect x="6.5" y="6.5" width="3" height="3" rx=".8"/><path d="M6.8 3h2.4M6.8 13h2.4M3 6.8v2.4M13 6.8v2.4"/></svg></div><div class="t g" style="left:46px;top:56px">变换</div><div class="a g" style="left:99px;top:56px"><svg class="ic" width="16" height="16" viewBox="0 0 16 16"><path d="M8 .8 14.300 4.300v7.400L8 15.200 1.700 11.700V4.300z" fill="#8c8c8c"/><path d="M8 8v6.200l-5.300-3V5.200z" fill="#3a3a3c"/><path d="M8 8l5.300-2.900" stroke="#3a3a3c" stroke-width=".8"/></svg></div><div class="t g" style="left:122px;top:56px">属性</div><div class="a g" style="left:174px;top:56px"><svg class="ic" width="16" height="16" viewBox="0 0 16 16" fill="none" stroke="currentColor" stroke-width="1.3" stroke-linecap="round" stroke-linejoin="round" style=""><rect x="1" y="3.500" width="9.500" height="9" rx="1.200"/><path d="M15 4.500 11.800 8 15 11.500" /><path d="M13.300 6.300v3.400" stroke-width="1"/></svg></div><div class="t g" style="left:198px;top:56px">相机</div><div class="a d" style="left:252px;top:56px"><svg class="ic" width="16" height="16" viewBox="0 0 16 16" fill="none" stroke="currentColor" stroke-width="1.3" stroke-linecap="round" stroke-linejoin="round" style=""><path d="M7 1.500 2 4.500v7l5 3z" fill="currentColor" stroke="none" opacity=".6"/><path d="M9 1.500v13" /><path d="M11 2.800 14 4.500v7l-3 1.700" stroke-dasharray="2 1.500"/></svg></div><div class="t d" style="left:274px;top:56px">显示</div><div class="a g" style="left:327px;top:56px"><svg class="ic" width="16" height="16" viewBox="0 0 16 16" fill="none" stroke="currentColor" stroke-width="1.3" stroke-linecap="round" stroke-linejoin="round" style=""><circle cx="2.6" cy="3" r="1.6" fill="currentColor" stroke="none" opacity=".45"/><circle cx="6.5" cy="7.200" r="2.1" fill="currentColor" stroke="none" opacity=".7"/><circle cx="11.5" cy="12.200" r="2.7" fill="currentColor" stroke="none"/></svg></div><div class="t g" style="left:361px;top:56px">特效</div><div class="a g" style="left:414px;top:56px"><svg class="ic" width="16" height="16" viewBox="0 0 16 16" fill="none" stroke="currentColor" stroke-width="1.3" stroke-linecap="round" stroke-linejoin="round" style=""><path d="M14.300 6.500A6.800 6.800 0 1 0 8.500 14.700"/><path d="M9.300 4v6.300" stroke-width="1.400"/><path d="M9.300 4l2.700 1.300"/><circle cx="7.800" cy="10.300" r="1.700"/><path d="M12.800 10v5M10.300 12.500h5" stroke-width="1.500"/></svg></div><div class="t g" style="left:437px;top:56px">音频</div><div class="a d" style="left:490px;top:56px"><svg class="ic" width="16" height="16" viewBox="0 0 16 16" fill="none" stroke="currentColor" stroke-width="1.3" stroke-linecap="round" stroke-linejoin="round" style=""><path d="M12 1.500 14.500 4 12 6.500M14 4H5a2.500 2.500 0 0 0 0 5h6a2.500 2.500 0 0 1 0 5H2M4 11.500 1.500 14 4 16.500" stroke-width="1.600"/></svg></div><div class="t d" style="left:513px;top:56px">轨迹</div><div class="a d" style="left:567px;top:56px"><svg class="ic" width="16" height="16" viewBox="0 0 16 16" fill="none" stroke="currentColor" stroke-width="1.3" stroke-linecap="round" stroke-linejoin="round" style=""><path d="M2.500 1.800h11V11L8 14.800 2.500 11z" stroke-width="1.500"/></svg></div><div class="t d" style="left:589px;top:56px">工步</div><i class="caret a g" style="left:348px;top:62px;margin:0;border-left-width:4px;border-right-width:4px;border-top-width:5px"></i><svg class="a" style="left:741px;top:53px" width="14" height="18" viewBox="0 0 14 18" fill="#747474"><path d="M8.500 3.800v10.400L.800 9z"/><rect x="11" y="1.200" width="1.200" height="15.600"/></svg><svg class="a" style="left:789px;top:53px" width="12" height="18" viewBox="0 0 12 18" fill="#747474"><path d="M1 3.800l9.300 5.200-9.300 5.200z"/></svg><div class="a" style="left:834.6px;top:57.0px;width:10.500px;height:10.500px;background:#747474"></div><svg class="a" style="left:880px;top:53px" width="14" height="18" viewBox="0 0 14 18" fill="#747474"><path d="M4.200 3.800v10.400L12 9z"/><rect x=".800" y="1.200" width="1.200" height="15.600"/></svg><svg class="a" style="left:921px;top:52px" width="22" height="20" viewBox="0 0 22 20" fill="none" stroke="#747474" stroke-width="1.500" stroke-linejoin="round"><path d="M15.500 3.800H4A2.500 2.500 0 0 0 1.500 6.300v9.400A2.500 2.500 0 0 0 4 18.200h14a2.500 2.500 0 0 0 2.500-2.500V8.500"/><path d="M15 .8 19.500 4.200 15 4.200z" fill="#747474"/><text x="11" y="14" font-size="6.800" font-weight="bold" font-family="Liberation Sans,Noto Sans CJK SC,sans-serif" fill="#747474" stroke="none" text-anchor="middle">正常</text></svg><i class="caret a" style="left:946px;top:60px;margin:0;color:#747474;border-left-width:3.500px;border-right-width:3.500px;border-top-width:4.500px"></i><div class="a" style="color:#7c7c7c;left:1094px;top:55px"><svg class="ic" width="17" height="17" viewBox="0 0 16 16" fill="none" stroke="currentColor" stroke-width="1.3" stroke-linecap="round" stroke-linejoin="round" style=""><circle cx="7.300" cy="7.300" r="6"/><path d="M11.800 11.800l3.400 3.400M4.500 7.300h5.600M7.300 4.500v5.600" stroke-width="1.400"/></svg></div><div class="a" style="left:1133px;top:61px;width:75px;height:4px;background:#2a2a2c;border-radius:2px"></div><div class="a" style="left:1133px;top:61px;width:10px;height:4px;background:#7c7c7c;border-radius:2px"></div><div class="a" style="left:1141px;top:59px;width:5px;height:9px;background:#7c7c7c;border-radius:1px"></div><div class="a" style="color:#7c7c7c;left:1231px;top:55px"><svg class="ic" width="17" height="17" viewBox="0 0 16 16" fill="none" stroke="currentColor" stroke-width="1.3" stroke-linecap="round" stroke-linejoin="round" style=""><circle cx="7.300" cy="7.300" r="6"/><path d="M11.800 11.800l3.400 3.400M4.500 7.300h5.600" stroke-width="1.400"/></svg></div><div class="a" style="color:#7c7c7c;left:1277px;top:55px"><svg class="ic" width="16" height="16" viewBox="0 0 16 16" fill="none" stroke="currentColor" stroke-width="1.3" stroke-linecap="round" stroke-linejoin="round" style=""><path d="M8 1v10.500M3.500 7.500 8 12 12.500 7.500M3 15.500h10" stroke-width="1.400"/></svg></div><div class="a" style="left:282px;top:105px;width:1024px;height:24px;background:#141416"></div><div class="a" style="left:282px;top:131px;width:1024px;height:24px;background:#141416"></div><div class="a" style="left:282px;top:157px;width:1024px;height:24px;background:#141416"></div><div class="a" style="left:282px;top:183px;width:1024px;height:24px;background:#141416"></div><div class="a" style="left:282px;top:209px;width:1024px;height:24px;background:#141416"></div><div class="a" style="left:282px;top:235px;width:1024px;height:24px;background:#141416"></div><div class="a" style="left:282px;top:261px;width:1024px;height:24px;background:#141416"></div><div class="a" style="left:282px;top:287px;width:1024px;height:24px;background:#141416"></div><div class="a" style="left:282px;top:313px;width:1024px;height:24px;background:#141416"></div><div class="a" style="left:282px;top:82px;width:1034px;height:30px;background:#0b0b0c"></div><svg class="a" style="left:282px;top:82px" width="1034" height="30" viewBox="0 0 1034 30"><path d="M25.5 15v14" stroke="#727272" stroke-width="1" stroke-dasharray="4 3"/><text x="25.5" y="9.500" font-size="9" fill="#7c7c7c" text-anchor="middle" font-family="Liberation Sans,sans-serif">0</text><path d="M49.5 23v6" stroke="#727272" stroke-width="1"/><path d="M73.5 23v6" stroke="#727272" stroke-width="1"/><path d="M97.5 23v6" stroke="#727272" stroke-width="1"/><path d="M121.5 23v6" stroke="#727272" stroke-width="1"/><path d="M145.5 15v14" stroke="#727272" stroke-width="1" stroke-dasharray="4 3"/><text x="145.5" y="9.500" font-size="9" fill="#7c7c7c" text-anchor="middle" font-family="Liberation Sans,sans-serif">1</text><path d="M169.5 23v6" stroke="#727272" stroke-width="1"/><path d="M193.5 23v6" stroke="#727272" stroke-width="1"/><path d="M217.5 23v6" stroke="#727272" stroke-width="1"/><path d="M241.5 23v6" stroke="#727272" stroke-width="1"/><path d="M265.5 15v14" stroke="#727272" stroke-width="1" stroke-dasharray="4 3"/><text x="265.5" y="9.500" font-size="9" fill="#7c7c7c" text-anchor="middle" font-family="Liberation Sans,sans-serif">2</text><path d="M289.5 23v6" stroke="#727272" stroke-width="1"/><path d="M313.5 23v6" stroke="#727272" stroke-width="1"/><path d="M337.5 23v6" stroke="#727272" stroke-width="1"/><path d="M361.5 23v6" stroke="#727272" stroke-width="1"/><path d="M385.5 15v14" stroke="#727272" stroke-width="1" stroke-dasharray="4 3"/><text x="385.5" y="9.500" font-size="9" fill="#7c7c7c" text-anchor="middle" font-family="Liberation Sans,sans-serif">3</text><path d="M409.5 23v6" stroke="#727272" stroke-width="1"/><path d="M433.5 23v6" stroke="#727272" stroke-width="1"/><path d="M457.5 23v6" stroke="#727272" stroke-width="1"/><path d="M481.5 23v6" stroke="#727272" stroke-width="1"/><path d="M505.5 15v14" stroke="#727272" stroke-width="1" stroke-dasharray="4 3"/><text x="505.5" y="9.500" font-size="9" fill="#7c7c7c" text-anchor="middle" font-family="Liberation Sans,sans-serif">4</text><path d="M529.5 23v6" stroke="#727272" stroke-width="1"/><path d="M553.5 23v6" stroke="#727272" stroke-width="1"/><path d="M577.5 23v6" stroke="#727272" stroke-width="1"/><path d="M601.5 23v6" stroke="#727272" stroke-width="1"/><path d="M625.5 15v14" stroke="#727272" stroke-width="1" stroke-dasharray="4 3"/><text x="625.5" y="9.500" font-size="9" fill="#7c7c7c" text-anchor="middle" font-family="Liberation Sans,sans-serif">5</text><path d="M649.5 23v6" stroke="#727272" stroke-width="1"/><path d="M673.5 23v6" stroke="#727272" stroke-width="1"/><path d="M697.5 23v6" stroke="#727272" stroke-width="1"/><path d="M721.5 23v6" stroke="#727272" stroke-width="1"/><path d="M745.5 15v14" stroke="#727272" stroke-width="1" stroke-dasharray="4 3"/><text x="745.5" y="9.500" font-size="9" fill="#7c7c7c" text-anchor="middle" font-family="Liberation Sans,sans-serif">6</text><path d="M769.5 23v6" stroke="#727272" stroke-width="1"/><path d="M793.5 23v6" stroke="#727272" stroke-width="1"/><path d="M817.5 23v6" stroke="#727272" stroke-width="1"/><path d="M841.5 23v6" stroke="#727272" stroke-width="1"/><path d="M865.5 15v14" stroke="#727272" stroke-width="1" stroke-dasharray="4 3"/><text x="865.5" y="9.500" font-size="9" fill="#7c7c7c" text-anchor="middle" font-family="Liberation Sans,sans-serif">7</text><path d="M889.5 23v6" stroke="#727272" stroke-width="1"/><path d="M913.5 23v6" stroke="#727272" stroke-width="1"/><path d="M937.5 23v6" stroke="#727272" stroke-width="1"/><path d="M961.5 23v6" stroke="#727272" stroke-width="1"/><path d="M985.5 15v14" stroke="#727272" stroke-width="1" stroke-dasharray="4 3"/><text x="985.5" y="9.500" font-size="9" fill="#7c7c7c" text-anchor="middle" font-family="Liberation Sans,sans-serif">8</text><path d="M1009.5 23v6" stroke="#727272" stroke-width="1"/></svg><i class="a" style="left:9px;top:114px;width:0;height:0;border-left:5.500px solid transparent;border-right:5.500px solid transparent;border-top:6px solid #8c8c8c"></i><div class="t" style="left:20px;top:109px;color:#8c8c8c">显示</div><div class="t" style="left:30px;top:135px;color:#8c8c8c;letter-spacing:.16px">http://10.122.92.200:9011/package/pc/3dca...</div><div class="t" style="left:30px;top:161px;color:#8c8c8c">引线1</div><div class="t" style="left:30px;top:187px;color:#8c8c8c">文本1</div><div class="t" style="left:20px;top:213px;color:#8c8c8c">变换</div><div class="t" style="left:20px;top:239px;color:#8c8c8c">轨迹</div><i class="a" style="left:9px;top:270px;width:0;height:0;border-left:5.500px solid transparent;border-right:5.500px solid transparent;border-top:6px solid #8c8c8c"></i><div class="t" style="left:20px;top:265px;color:#8c8c8c">多圈旋转</div><div class="t" style="left:30px;top:291px;color:#8c8c8c">Body_169352-3圈</div><div class="a" style="left:306px;top:134.0px;width:362px;height:18px;background:#0c3066"></div><svg class="a" style="left:301.0px;top:135.5px" width="12" height="14" viewBox="0 0 12 14"><path d="M6 .5 11.500 7 6 13.500.500 7z" fill="#7a7a7a"/></svg><svg class="a" style="left:661.5px;top:135.5px" width="12" height="14" viewBox="0 0 12 14"><path d="M6 .5 11.500 7 6 13.500.500 7z" fill="#7a7a7a"/></svg><div class="a" style="left:306px;top:160.0px;width:362px;height:18px;background:#0c3066"></div><svg class="a" style="left:301.0px;top:161.5px" width="12" height="14" viewBox="0 0 12 14"><path d="M6 .5 11.500 7 6 13.500.500 7z" fill="#7a7a7a"/></svg><svg class="a" style="left:661.5px;top:161.5px" width="12" height="14" viewBox="0 0 12 14"><path d="M6 .5 11.500 7 6 13.500.500 7z" fill="#7a7a7a"/></svg><div class="a" style="left:306px;top:186.0px;width:362px;height:18px;background:#0c3066"></div><svg class="a" style="left:301.0px;top:187.5px" width="12" height="14" viewBox="0 0 12 14"><path d="M6 .5 11.500 7 6 13.500.500 7z" fill="#7a7a7a"/></svg><svg class="a" style="left:661.5px;top:187.5px" width="12" height="14" viewBox="0 0 12 14"><path d="M6 .5 11.500 7 6 13.500.500 7z" fill="#7a7a7a"/></svg><div class="a" style="left:306px;top:212.0px;width:362px;height:18px;background:#0c3066"></div><svg class="a" style="left:301.0px;top:213.5px" width="12" height="14" viewBox="0 0 12 14"><path d="M6 .5 11.500 7 6 13.500.500 7z" fill="#7a7a7a"/></svg><svg class="a" style="left:661.5px;top:213.5px" width="12" height="14" viewBox="0 0 12 14"><path d="M6 .5 11.500 7 6 13.500.500 7z" fill="#7a7a7a"/></svg><svg class="a" style="left:496.0px;top:213.5px" width="12" height="14" viewBox="0 0 12 14"><path d="M6 .5 11.500 7 6 13.500.500 7z" fill="#7a7a7a"/></svg><div class="a" style="left:666px;top:290.0px;width:122px;height:18px;background:#0c3066"></div><svg class="a" style="left:661.0px;top:291.5px" width="12" height="14" viewBox="0 0 12 14"><path d="M6 .5 11.500 7 6 13.500.500 7z" fill="#7a7a7a"/></svg><svg class="a" style="left:781.5px;top:291.5px" width="12" height="14" viewBox="0 0 12 14"><path d="M6 .5 11.500 7 6 13.500.500 7z" fill="#7a7a7a"/></svg><div class="a" style="left:836px;top:97px;width:2px;height:220px;background:#8c8c8c"></div><div class="a" style="left:835px;top:97px;width:4px;height:13px;background:#9a9a9a;border-radius:1px"></div><div class="a" style="left:1308px;top:159px;width:7px;height:200px;background:#1c1c1e;border-radius:3px"></div><div class="a" style="left:1308px;top:133px;width:0;height:0;border-left:3.500px solid transparent;border-right:3.500px solid transparent;border-bottom:4px solid #1c1c1e"></div></div></body></html>
